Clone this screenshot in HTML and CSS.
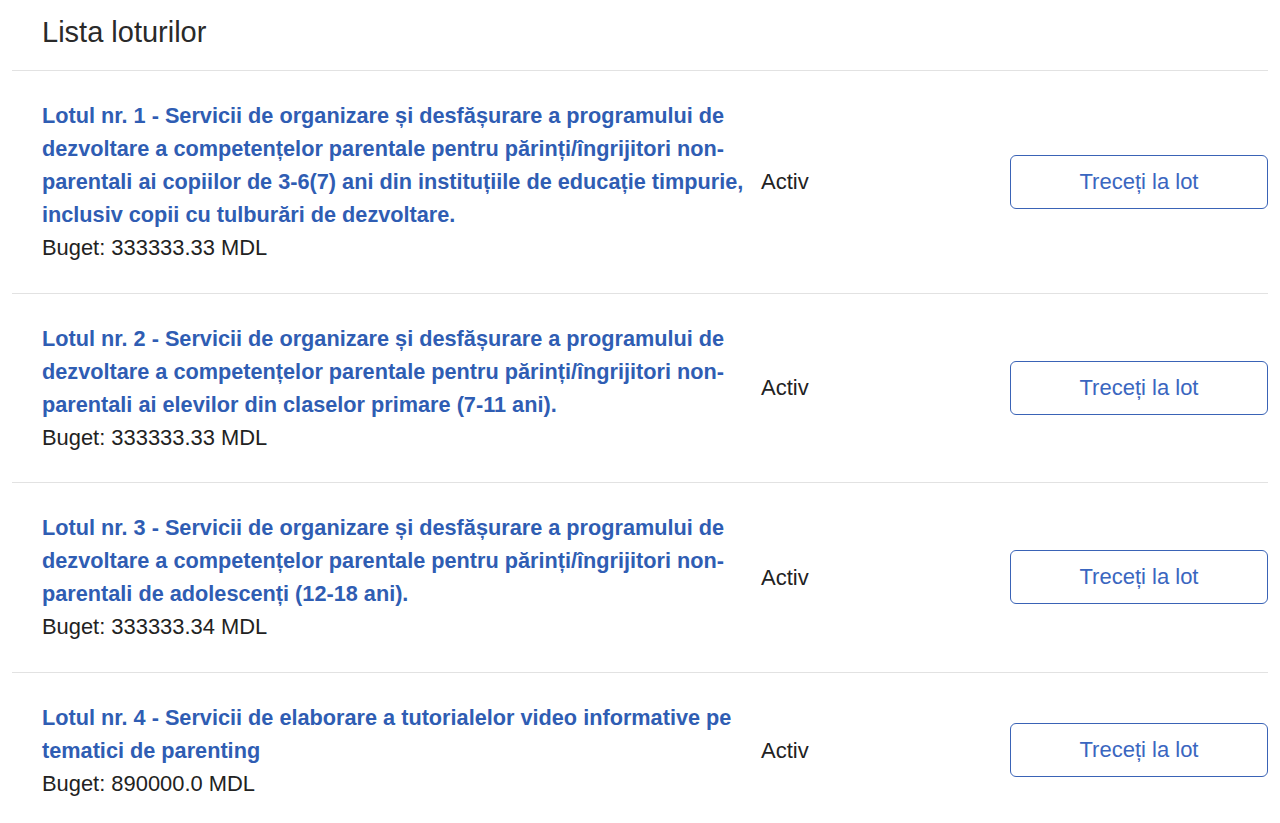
FILE: index.html
```html
<!DOCTYPE html>
<html lang="ro">
<head>
    <meta charset="UTF-8">
    <meta name="viewport" content="width=device-width, initial-scale=1.0">
    <title>Lista loturilor</title>
    <link rel="stylesheet" href="styles.css">
</head>
<body>
    <div class="container">
        <h2 class="page-title">Lista loturilor</h2>

        <div class="lot-list">
            <div class="lot-row">
                <div class="lot-info">
                    <a class="lot-name" href="#">Lotul nr. 1 - Servicii de organizare și desfășurare a programului de dezvoltare a competențelor parentale pentru părinți/îngrijitori non-parentali ai copiilor de 3-6(7) ani din instituțiile de educație timpurie, inclusiv copii cu tulburări de dezvoltare.</a>
                    <div class="lot-budget">Buget: 333333.33 MDL</div>
                </div>
                <div class="lot-status">Activ</div>
                <a class="lot-button" href="#">Treceți la lot</a>
            </div>

            <div class="lot-row">
                <div class="lot-info">
                    <a class="lot-name" href="#">Lotul nr. 2 - Servicii de organizare și desfășurare a programului de dezvoltare a competențelor parentale pentru părinți/îngrijitori non-parentali ai elevilor din claselor primare (7-11 ani).</a>
                    <div class="lot-budget">Buget: 333333.33 MDL</div>
                </div>
                <div class="lot-status">Activ</div>
                <a class="lot-button" href="#">Treceți la lot</a>
            </div>

            <div class="lot-row">
                <div class="lot-info">
                    <a class="lot-name" href="#">Lotul nr. 3 - Servicii de organizare și desfășurare a programului de dezvoltare a competențelor parentale pentru părinți/îngrijitori non-parentali de adolescenți (12-18 ani).</a>
                    <div class="lot-budget">Buget: 333333.34 MDL</div>
                </div>
                <div class="lot-status">Activ</div>
                <a class="lot-button" href="#">Treceți la lot</a>
            </div>

            <div class="lot-row">
                <div class="lot-info">
                    <a class="lot-name" href="#">Lotul nr. 4 - Servicii de elaborare a tutorialelor video informative pe tematici de parenting</a>
                    <div class="lot-budget">Buget: 890000.0 MDL</div>
                </div>
                <div class="lot-status">Activ</div>
                <a class="lot-button" href="#">Treceți la lot</a>
            </div>
        </div>
    </div>
</body>
</html>
```

FILE: styles.css
```css
body {
    margin: 0;
    background-color: #fff;
    color: #222;
    font-family: "Liberation Sans", Arial, Helvetica, sans-serif;
}

.container {
    margin: 0 12px;
}

.page-title {
    margin: 0;
    padding: 15px 30px 21px;
    font-size: 29px;
    line-height: 34px;
    font-weight: normal;
    color: #2a2a2a;
}

.lot-row {
    display: grid;
    grid-template-columns: 716px 1fr 258px;
    column-gap: 3px;
    align-items: center;
    padding: 28px 0 28.5px 30px;
    border-top: 1px solid #e2e2e2;
}

.lot-info {
    font-size: 21.7px;
    line-height: 33px;
}

.lot-name {
    display: block;
    font-weight: bold;
    color: #2f5db3;
    text-decoration: none;
}

.lot-budget {
    font-size: 21.9px;
    color: #222;
}

.lot-status {
    font-size: 22px;
    line-height: 33px;
    color: #222;
}

.lot-button {
    display: flex;
    align-items: center;
    justify-content: center;
    height: 52px;
    border: 1px solid #3a63b6;
    border-radius: 6px;
    font-size: 22px;
    color: #3a66c0;
    text-decoration: none;
}
```
